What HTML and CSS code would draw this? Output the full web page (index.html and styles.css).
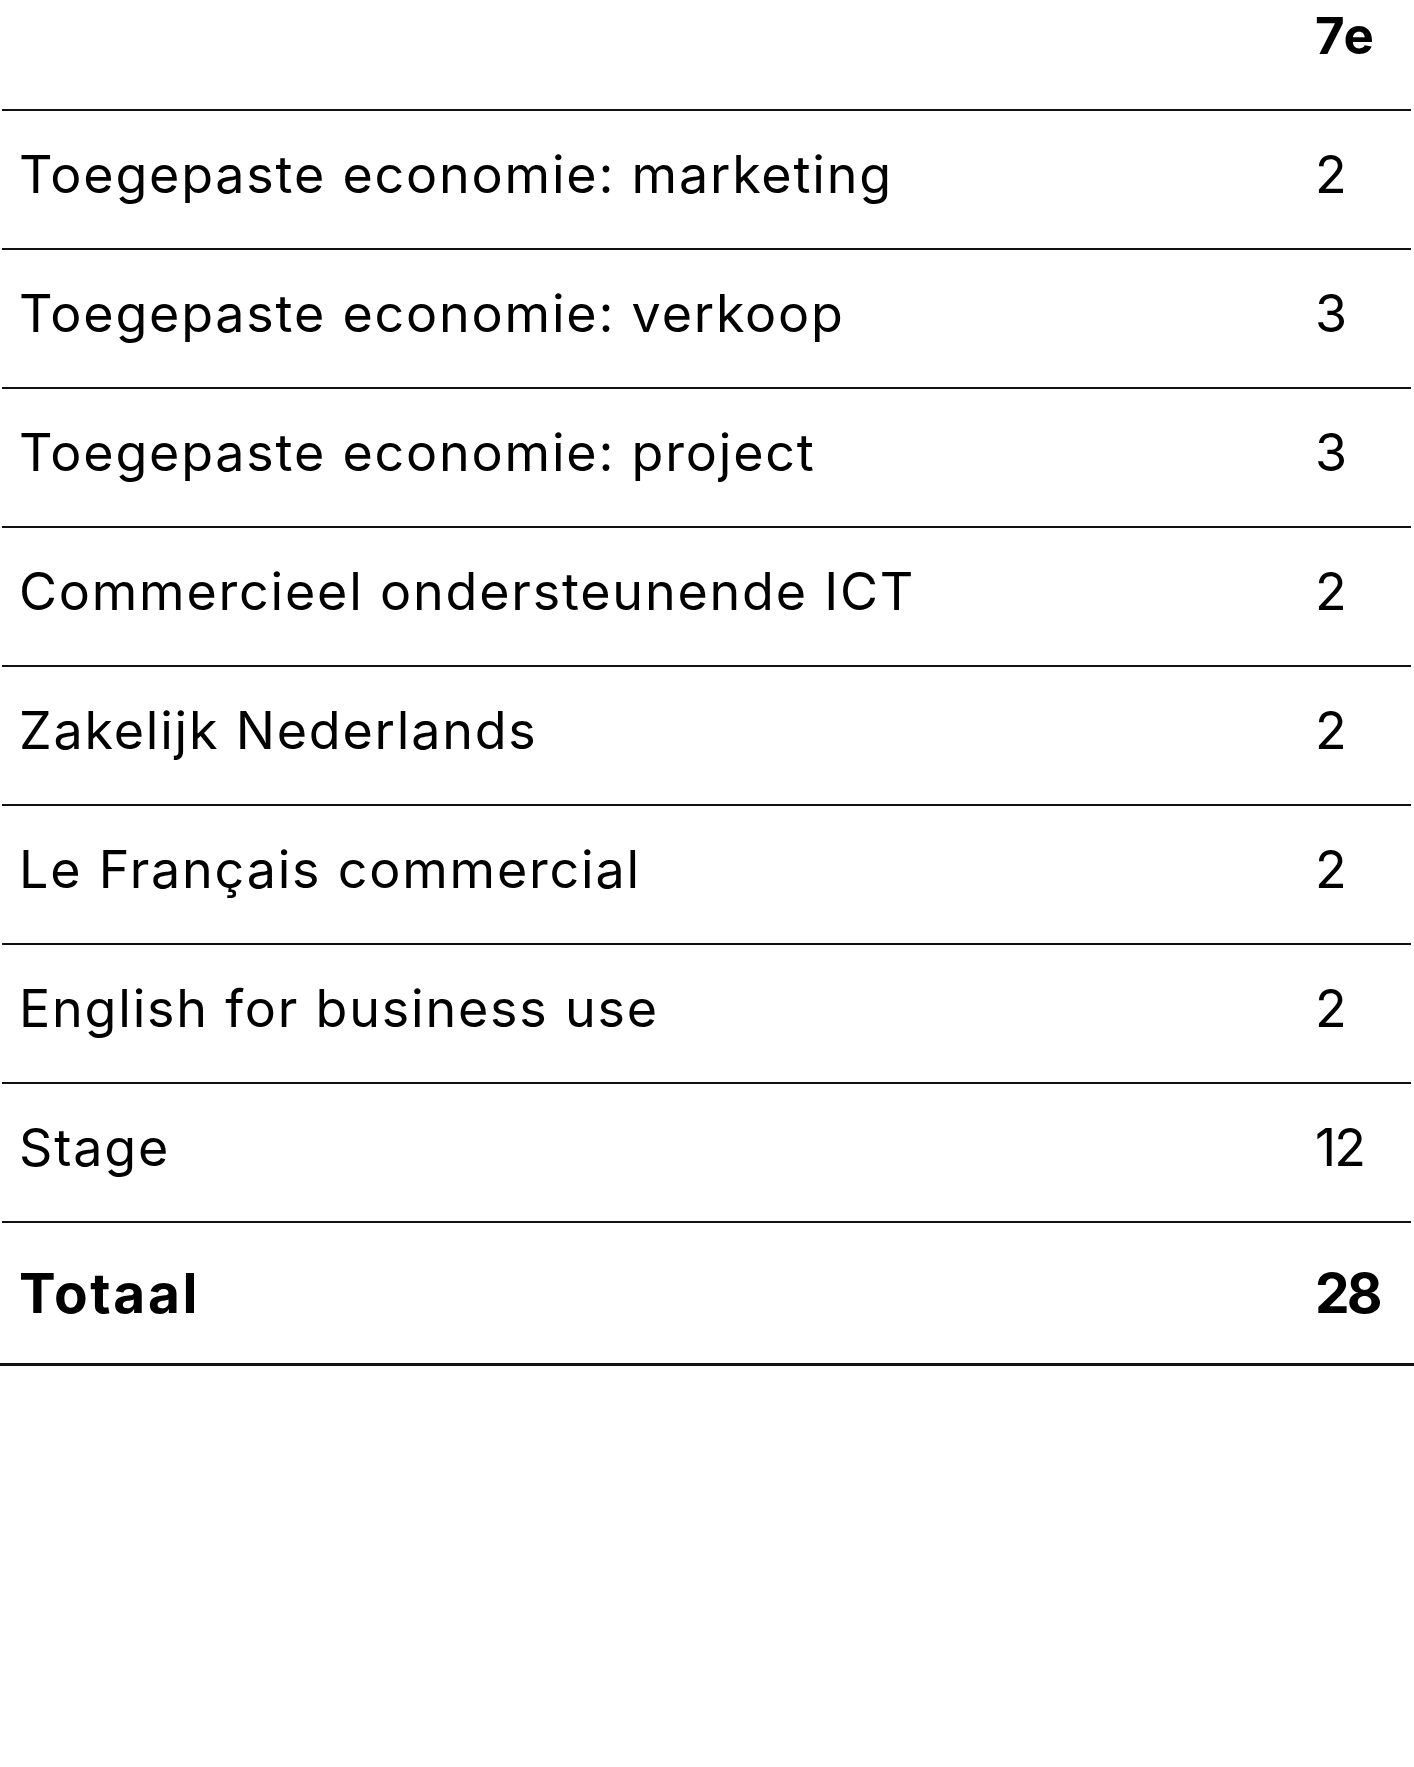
FILE: index.html
```html
<!DOCTYPE html>
<html lang="nl">
<head>
<meta charset="utf-8">
<title>Lessentabel 7e jaar</title>
<link rel="stylesheet" href="styles.css">
</head>
<body>
<div class="schedule">
  <div class="row row-head">
    <div class="label"></div>
    <div class="value">7e</div>
  </div>
  <div class="row"><div class="label">Toegepaste economie: marketing</div><div class="value">2</div></div>
  <div class="row"><div class="label">Toegepaste economie: verkoop</div><div class="value">3</div></div>
  <div class="row"><div class="label">Toegepaste economie: project</div><div class="value">3</div></div>
  <div class="row"><div class="label">Commercieel ondersteunende ICT</div><div class="value">2</div></div>
  <div class="row"><div class="label">Zakelijk Nederlands</div><div class="value">2</div></div>
  <div class="row"><div class="label">Le Français commercial</div><div class="value">2</div></div>
  <div class="row"><div class="label">English for business use</div><div class="value">2</div></div>
  <div class="row"><div class="label">Stage</div><div class="value">12</div></div>
  <div class="row row-total"><div class="label">Totaal</div><div class="value">28</div></div>
</div>
</body>
</html>
```

FILE: styles.css
```css
html, body {
  margin: 0;
  padding: 0;
  background: #fff;
}

body {
  font-family: Inter, "Noto Sans", sans-serif;
  color: #000;
}

.schedule {
  width: 1414px;
  border-bottom: 3px solid #111;
}

.row {
  display: flex;
  align-items: center;
  height: 139px;
  margin: 0 3px 0 2px;
  box-sizing: border-box;
  border-bottom: 2px solid #111;
  font-size: 52px;
  line-height: 60px;
  font-weight: 400;
}

.label {
  flex: 1;
  padding-left: 17px;
  padding-bottom: 9px;
  letter-spacing: 1.8px;
}

.value {
  width: 96px;
  padding-bottom: 9px;
  letter-spacing: -2px;
}

.row-head {
  height: 111px;
  align-items: flex-start;
  font-weight: 700;
  font-size: 51px;
}

.row-head .value {
  padding-top: 6px;
  padding-bottom: 0;
  letter-spacing: 1.5px;
}

.row-total {
  height: 140px;
  border-bottom: none;
  font-weight: 700;
  font-size: 55px;
}

.row-total .label {
  padding-bottom: 1px;
  letter-spacing: 2.6px;
}

.row-total .value {
  padding-bottom: 1px;
  letter-spacing: -3px;
}
```
